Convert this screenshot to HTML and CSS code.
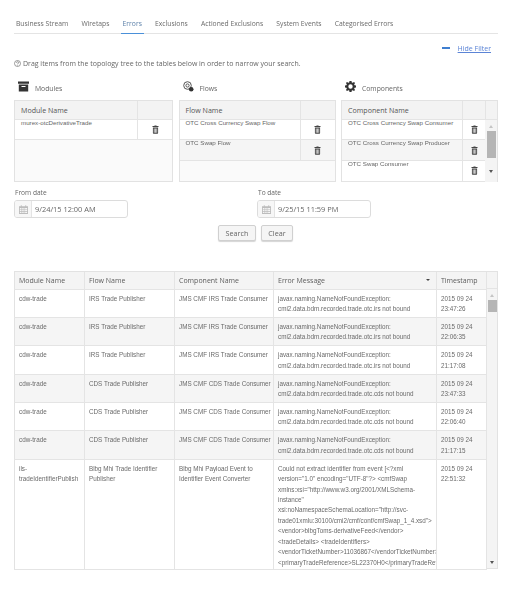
FILE: index.html
```html
<!DOCTYPE html>
<html lang="en">
<head>
<meta charset="utf-8">
<title>Errors</title>
<link rel="stylesheet" href="styles.css">
</head>
<body>
<svg class="defs" width="0" height="0" aria-hidden="true">
  <symbol id="trash" viewBox="0 0 10 12"><path d="M3.500 1V.3h3V1H9.300v1.600H.7V1z"/><path fill-rule="evenodd" d="M1.300 3.200h7.400V11q0 1-1 1H2.300q-1 0-1-1zM2.600 4.400v6.300h1V4.400zM4.500 4.400v6.300h1V4.400zM6.400 4.400v6.300h1V4.400z"/></symbol>
  <symbol id="cal" viewBox="0 0 10 10"><path fill-rule="evenodd" d="M0 1.400h2V.2h1v1.200h4V.2h1v1.200h2V10H0zM1 3.400V4.600h1.200V3.400zM2.800 3.400V4.600H4.200V3.400zM4.800 3.400V4.600h1.400V3.400zM6.800 3.400V4.600H9V3.400zM1 5.400V6.600h1.200V5.400zM2.800 5.400V6.600H4.200V5.400zM4.800 5.400V6.600h1.400V5.400zM6.800 5.400V6.600H9V5.400zM1 7.400V9h1.200V7.400zM2.800 7.400V9H4.200V7.400zM4.800 7.400V9h1.400V7.400zM6.800 7.400V9H9V7.400z"/></symbol>
</svg>

<nav class="tabs">
  <a class="tab">Business Stream</a>
  <a class="tab">Wiretaps</a>
  <a class="tab active">Errors</a>
  <a class="tab">Exclusions</a>
  <a class="tab">Actioned Exclusions</a>
  <a class="tab">System Events</a>
  <a class="tab">Categorised Errors</a>
</nav>

<div class="filter-toggle"><span class="minus"></span><a class="hide-link">Hide Filter</a></div>

<p class="help"><svg class="help-icon" viewBox="0 0 10 10"><circle cx="5" cy="5" r="4.300" fill="none" stroke="#666" stroke-width=".9"/><path d="M3.500 4c0-2 3.200-2 3.200-.2 0 1.100-1.700 1.100-1.700 2.400" fill="none" stroke="#666"/><circle cx="5" cy="7.600" r=".6" fill="#666"/></svg>Drag items from the topology tree to the tables below in order to narrow your search.</p>

<section class="pickers">
  <div class="picker">
    <h3 class="picker-title"><svg class="picker-icon" viewBox="0 0 11 10"><path fill="#333" fill-rule="evenodd" d="M0 0h11v2.200H0zM.8 3h9.400v7H.8zM3.500 4.400v1.100h4V4.400z"/></svg>Modules</h3>
    <div class="grid">
      <div class="grid-head"><span class="cell-name">Module Name</span><span class="cell-act"></span></div>
      <div class="grid-row"><span class="cell-name">murex-otcDerivativeTrade</span><span class="cell-act"><svg class="trash"><use href="#trash"/></svg></span></div>
    </div>
  </div>
  <div class="picker">
    <h3 class="picker-title"><svg class="picker-icon" viewBox="0 0 11 11"><circle cx="4.500" cy="4.500" r="3.800" fill="none" stroke="#555"/><circle cx="4.500" cy="4.500" r="1.600" fill="none" stroke="#555"/><circle cx="8.200" cy="8.200" r="2.300" fill="#333"/></svg>Flows</h3>
    <div class="grid">
      <div class="grid-head"><span class="cell-name">Flow Name</span><span class="cell-act"></span></div>
      <div class="grid-row"><span class="cell-name">OTC Cross Currency Swap Flow</span><span class="cell-act"><svg class="trash"><use href="#trash"/></svg></span></div>
      <div class="grid-row alt"><span class="cell-name">OTC Swap Flow</span><span class="cell-act"><svg class="trash"><use href="#trash"/></svg></span></div>
    </div>
  </div>
  <div class="picker">
    <h3 class="picker-title"><svg class="picker-icon" viewBox="0 0 12 12"><path fill="#333" fill-rule="evenodd" d="M4.900 0h2.200l.3 1.600 1 .4L9.800 1l1.200 1.200-1 1.400.4 1L12 4.900v2.200l-1.600.3-.4 1 1 1.400-1.200 1.200-1.400-1-1 .4-.3 1.600H4.900l-.3-1.600-1-.4-1.400 1L1 9.800l1-1.400-.4-1L0 7.100V4.900l1.600-.3.4-1-1-1.400L2.200 1l1.400 1 1-.4zM6 3.600a2.400 2.400 0 1 0 0 4.800 2.400 2.400 0 0 0 0-4.800z"/></svg>Components</h3>
    <div class="grid scrolling">
      <div class="grid-head"><span class="cell-name">Component Name</span><span class="cell-act"></span><span class="cell-bar"></span></div>
      <div class="grid-row"><span class="cell-name">OTC Cross Currency Swap Consumer</span><span class="cell-act"><svg class="trash"><use href="#trash"/></svg></span></div>
      <div class="grid-row alt"><span class="cell-name">OTC Cross Currency Swap Producer</span><span class="cell-act"><svg class="trash"><use href="#trash"/></svg></span></div>
      <div class="grid-row"><span class="cell-name">OTC Swap Consumer</span><span class="cell-act"><svg class="trash"><use href="#trash"/></svg></span></div>
      <div class="mini-scroll"><span class="arrow up"></span><span class="thumb"></span><span class="arrow down"></span></div>
    </div>
  </div>
</section>

<section class="dates">
  <div class="date-field">
    <label class="date-label">From date</label>
    <div class="date-input"><span class="addon"><svg class="cal"><use href="#cal"/></svg></span><span class="date-value">9/24/15 12:00 AM</span></div>
  </div>
  <div class="date-field">
    <label class="date-label">To date</label>
    <div class="date-input"><span class="addon"><svg class="cal"><use href="#cal"/></svg></span><span class="date-value">9/25/15 11:59 PM</span></div>
  </div>
</section>

<div class="actions"><button class="btn btn-search">Search</button><button class="btn btn-clear">Clear</button></div>

<section class="results">
  <table class="results-table">
    <thead>
      <tr><th class="c1">Module Name</th><th class="c2">Flow Name</th><th class="c3">Component Name</th><th class="c4"><span class="sort-head">Error Message<span class="sort-caret"></span></span></th><th class="c5">Timestamp</th></tr>
    </thead>
    <tbody>
      <tr><td>cdw-trade</td><td>IRS Trade Publisher</td><td>JMS CMF IRS Trade Consumer</td><td>javax.naming.NameNotFoundException:<br>cmi2.data.bdm.recorded.trade.otc.irs not bound</td><td>2015 09 24<br>23:47:26</td></tr>
      <tr class="alt"><td>cdw-trade</td><td>IRS Trade Publisher</td><td>JMS CMF IRS Trade Consumer</td><td>javax.naming.NameNotFoundException:<br>cmi2.data.bdm.recorded.trade.otc.irs not bound</td><td>2015 09 24<br>22:06:35</td></tr>
      <tr><td>cdw-trade</td><td>IRS Trade Publisher</td><td>JMS CMF IRS Trade Consumer</td><td>javax.naming.NameNotFoundException:<br>cmi2.data.bdm.recorded.trade.otc.irs not bound</td><td>2015 09 24<br>21:17:08</td></tr>
      <tr class="alt"><td>cdw-trade</td><td>CDS Trade Publisher</td><td>JMS CMF CDS Trade Consumer</td><td>javax.naming.NameNotFoundException:<br>cmi2.data.bdm.recorded.trade.otc.cds not bound</td><td>2015 09 24<br>23:47:33</td></tr>
      <tr><td>cdw-trade</td><td>CDS Trade Publisher</td><td>JMS CMF CDS Trade Consumer</td><td>javax.naming.NameNotFoundException:<br>cmi2.data.bdm.recorded.trade.otc.cds not bound</td><td>2015 09 24<br>22:06:40</td></tr>
      <tr class="alt"><td>cdw-trade</td><td>CDS Trade Publisher</td><td>JMS CMF CDS Trade Consumer</td><td>javax.naming.NameNotFoundException:<br>cmi2.data.bdm.recorded.trade.otc.cds not bound</td><td>2015 09 24<br>21:17:15</td></tr>
      <tr class="tall"><td>ils-<br>tradeIdentifierPublish</td><td>Blbg Mhi Trade Identifier Publisher</td><td>Blbg Mhi Payload Event to Identifier Event Converter</td><td><div class="clip">Could not extract identifier from event [&lt;?xml<br>version="1.0" encoding="UTF-8"?&gt; &lt;cmfSwap<br>xmlns:xsi="http://www.w3.org/2001/XMLSchema-<br>instance"<br>xsi:noNamespaceSchemaLocation="http://svc-<br>trade01xmlu:30100/cmi2/cmf/conf/cmfSwap_1_4.xsd"&gt;<br>&lt;vendor&gt;blbgToms-derivativeFeed&lt;/vendor&gt;<br>&lt;tradeDetails&gt; &lt;tradeIdentifiers&gt;<br>&lt;vendorTicketNumber&gt;11036867&lt;/vendorTicketNumber&gt;<br>&lt;primaryTradeReference&gt;SL22370H0&lt;/primaryTradeReference&gt;</div></td><td>2015 09 24<br>22:51:32</td></tr>
    </tbody>
  </table>
  <div class="big-scroll"><div class="big-scroll-head"></div><div class="big-track"><span class="arrow up"></span><span class="big-thumb"></span><span class="arrow down bottom"></span></div></div>
</section>
</body>
</html>
```
FILE: styles.css
```css
* { box-sizing: border-box; }
html, body { margin: 0; padding: 0; }
body { width: 512px; height: 603px; overflow: hidden; background: #fff; color: #666; font-family: "Open Sans", sans-serif; font-size: 7px; padding: 0 14px; filter: blur(.3px); }
.defs { position: absolute; }

.tabs { display: flex; height: 34px; padding-top: 20px; border-bottom: 1px solid #e4e4e4; }
.tab { padding: 0 2px; margin-right: 9.200px; height: 14px; line-height: 8px; color: #6a6a6a; font-size: 6.750px; }
.tab.active { color: #5a7fa8; border-bottom: 1.500px solid #4a90d9; margin-bottom: -1px; }

.filter-toggle { display: flex; justify-content: flex-end; align-items: center; gap: 8px; height: 10px; margin-top: 9px; padding-right: 7px; }
.minus { width: 8px; height: 2px; background: #3f7fd0; }
.hide-link { color: #5b84d6; text-decoration: underline; font-size: 7px; }

.help { display: flex; align-items: center; margin: 5px 0 0; height: 10px; font-size: 6.980px; color: #666; white-space: nowrap; }
.help-icon { width: 7px; height: 7px; margin-right: 2px; }

.pickers { display: grid; grid-template-columns: 159px 157px 157px; column-gap: 5.500px; margin-top: 13px; }
.picker-title { display: flex; align-items: center; margin: 0 0 5px; height: 14px; padding-left: 4px; font-weight: 400; font-size: 6.800px; color: #666; }
.picker-icon { width: 11px; height: 11px; margin-right: 6px; margin-top: -3px; }

.grid { position: relative; height: 82px; background: #fafafa; border: 1px solid #e2e2e2; }
.grid-head { display: flex; height: 18.500px; background: #f3f3f3; border-bottom: 1px solid #e4e4e4; font-size: 7.100px; color: #555; }
.grid-head .cell-name { line-height: 18px; padding-left: 6px; }
.grid-row { display: flex; height: 20.700px; background: #fff; border-bottom: 1px solid #e4e4e4; font-family: "Liberation Sans", sans-serif; font-size: 6.200px; }
.grid-row.alt { background: #f5f5f5; }
.cell-name { flex: 1; min-width: 0; padding-left: 6px; white-space: nowrap; line-height: 6px; }
.cell-act { width: 35px; flex: none; display: flex; align-items: center; justify-content: center; border-left: 1px solid #e4e4e4; }
.cell-bar { width: 12px; flex: none; border-left: 1px solid #e4e4e4; }
.grid.scrolling .grid-row { margin-right: 12px; }
.grid.scrolling .cell-act { width: 23px; }
.trash { width: 7px; height: 9px; fill: #444; }

.mini-scroll { position: absolute; right: 0; top: 19px; width: 12px; height: 62px; background: #f4f4f4; display: flex; flex-direction: column; align-items: center; padding-top: 5px; }
.thumb { width: 9px; height: 27px; margin-top: 3px; background: #b5b5b5; }
.arrow { width: 0; height: 0; border-left: 2.500px solid transparent; border-right: 2.500px solid transparent; }
.arrow.up { border-bottom: 3px solid #c4c4c4; }
.arrow.down { border-top: 3px solid #555; margin-top: 12px; }

.dates { display: grid; grid-template-columns: 243px 113px; margin-top: 5px; }
.date-label { display: block; height: 13px; line-height: 11px; padding-left: 1px; font-size: 6.600px; color: #666; }
.date-input { display: flex; align-items: center; width: 114px; height: 18px; border: 1px solid #dcdcdc; border-radius: 3px; background: #fff; }
.addon { width: 17px; height: 100%; display: flex; align-items: center; justify-content: center; background: #f7f7f7; border-right: 1px solid #e4e4e4; border-radius: 2px 0 0 2px; }
.cal { width: 9px; height: 9px; fill: #bdbdbd; }
.date-value { padding-left: 3px; font-size: 7.400px; color: #666; }

.actions { display: flex; justify-content: flex-start; gap: 5px; margin: 7px 0 0 204px; }
.btn { height: 15.500px; padding: 0; border: 1px solid #d0d0d0; border-radius: 2px; background: #f5f5f5; box-shadow: 0 1px 1px #d5d5d5; color: #666; font-family: "Open Sans", sans-serif; font-size: 7.200px; }
.btn-search { width: 38px; }
.btn-clear { width: 32px; }

.results { display: flex; height: 298px; margin-top: 30.500px; border: 1px solid #e2e2e2; border-top-width: 1.500px; border-left: 0; }
.results-table { width: 472px; flex: none; table-layout: fixed; border-collapse: collapse; height: 297px; border-left: 1px solid #e2e2e2; }
.c1 { width: 70px; } .c2 { width: 90px; } .c3 { width: 99px; } .c4 { width: 163px; } .c5 { width: 50px; }
th { height: 17px; padding: 0 4px; background: #f4f4f4; border-right: 1px solid #e4e4e4; border-bottom: 1px solid #e4e4e4; text-align: left; font-weight: 400; font-size: 7px; color: #5c5c5c; white-space: nowrap; }
td { height: 28.400px; padding: 4px 1px 0 4px; vertical-align: top; border-right: 1px solid #e4e4e4; border-bottom: 1px solid #e4e4e4; font-family: "Liberation Sans", sans-serif; font-size: 6.300px; line-height: 10.400px; color: #6a6a6a; overflow: hidden; background: #fff; }
tr.alt td { background: #f5f5f5; }
tr.tall td { height: 109px; padding-top: 4px; }
.clip { height: 105px; width: 158px; overflow: hidden; white-space: nowrap; }
.sort-head { display: flex; justify-content: space-between; align-items: center; padding-right: 2px; }
.sort-caret { width: 0; height: 0; border-left: 2px solid transparent; border-right: 2px solid transparent; border-top: 2.500px solid #444; }

.big-scroll { flex: 1; display: flex; flex-direction: column; background: #f4f4f4; }
.big-scroll-head { height: 17px; border-bottom: 1px solid #e4e4e4; }
.big-track { position: relative; flex: 1; display: flex; flex-direction: column; align-items: center; padding-top: 5px; }
.big-thumb { width: 9px; height: 12px; margin-top: 3px; background: #b5b5b5; }
.arrow.bottom { position: absolute; bottom: 4px; margin: 0; }
```
